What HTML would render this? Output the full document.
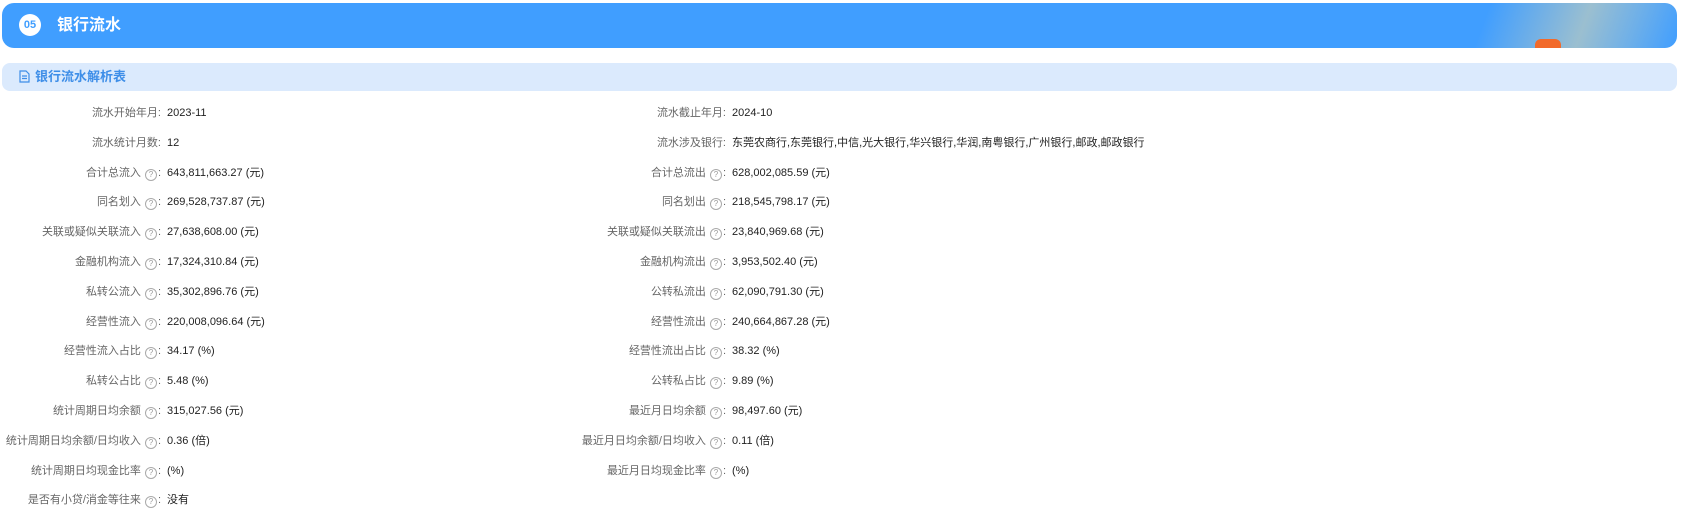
<!DOCTYPE html>
<html><head><meta charset="utf-8"><style>
body{margin:0;width:1698px;height:522px;background:#fff;font-family:"Liberation Sans","Noto Sans CJK SC",sans-serif;position:relative;overflow:hidden}
.hdr{position:absolute;left:2px;top:3px;width:1675px;height:45px;border-radius:12px;background:linear-gradient(110deg,#409eff 0%,#409eff 88%,#9bbfd0 94%,#6fb0e8 97%,#409eff 100%);overflow:hidden}
.num{position:absolute;left:17px;top:11px;width:22px;height:22px;border-radius:50%;background:#fff;color:#409eff;font-size:11px;font-weight:bold;text-align:center;line-height:22px}
.ttl{position:absolute;left:55px;top:13px;color:#fff;font-size:16px;font-weight:bold;line-height:20px}
.gift{position:absolute;left:1533px;top:36px;width:26px;height:12px;background:#f26a2a;border-radius:6px 6px 0 0}
.sub{position:absolute;left:2px;top:63px;width:1675px;height:28px;border-radius:8px;background:#dbeafd}
.sub span{position:absolute;left:33px;top:5px;color:#3e8ee8;font-size:13px;font-weight:bold;line-height:17px}
.sub svg{position:absolute;left:17px;top:7px}
.r{position:absolute;font-size:11px;line-height:14px;white-space:nowrap}
.l{color:#666;text-align:right}
.v{color:#222}
.q{display:inline-block;width:10px;height:10px;border:1px solid #aaa;border-radius:50%;font-size:8px;line-height:10px;text-align:center;color:#999;margin:0 1px 0 4px;vertical-align:-1px}
</style></head><body>
<div class="hdr"><div class="num">05</div><div class="ttl">银行流水</div><div class="gift"></div></div>
<div class="sub"><svg width="11" height="13" viewBox="0 0 11 13"><path d="M1 1h6l3 3v8H1z M3 6h5 M3 8.5h5" fill="none" stroke="#3e8ee8" stroke-width="1.2"/></svg><span>银行流水解析表</span></div>
<div id="rows"></div>
<script>
var L=[["流水开始年月",0,"2023-11"],["流水统计月数",0,"12"],["合计总流入",1,"643,811,663.27 (元)"],["同名划入",1,"269,528,737.87 (元)"],["关联或疑似关联流入",1,"27,638,608.00 (元)"],["金融机构流入",1,"17,324,310.84 (元)"],["私转公流入",1,"35,302,896.76 (元)"],["经营性流入",1,"220,008,096.64 (元)"],["经营性流入占比",1,"34.17 (%)"],["私转公占比",1,"5.48 (%)"],["统计周期日均余额",1,"315,027.56 (元)"],["统计周期日均余额/日均收入",1,"0.36 (倍)"],["统计周期日均现金比率",1,"(%)"],["是否有小贷/消金等往来",1,"没有"]];
var R=[["流水截止年月",0,"2024-10"],["流水涉及银行",0,"东莞农商行,东莞银行,中信,光大银行,华兴银行,华润,南粤银行,广州银行,邮政,邮政银行"],["合计总流出",1,"628,002,085.59 (元)"],["同名划出",1,"218,545,798.17 (元)"],["关联或疑似关联流出",1,"23,840,969.68 (元)"],["金融机构流出",1,"3,953,502.40 (元)"],["公转私流出",1,"62,090,791.30 (元)"],["经营性流出",1,"240,664,867.28 (元)"],["经营性流出占比",1,"38.32 (%)"],["公转私占比",1,"9.89 (%)"],["最近月日均余额",1,"98,497.60 (元)"],["最近月日均余额/日均收入",1,"0.11 (倍)"],["最近月日均现金比率",1,"(%)"]];
var h="";
function add(a,lx,vx){a.forEach(function(r,i){var y=106+i*29.8;h+='<div class="r l" style="right:'+(1698-lx)+'px;top:'+y+'px">'+r[0]+(r[1]?'<span class="q">?</span>':'')+':</div><div class="r v" style="left:'+vx+'px;top:'+y+'px">'+r[2]+'</div>';});}
add(L,161,167);add(R,726,732);
document.getElementById("rows").innerHTML=h;
</script>
</body></html>
